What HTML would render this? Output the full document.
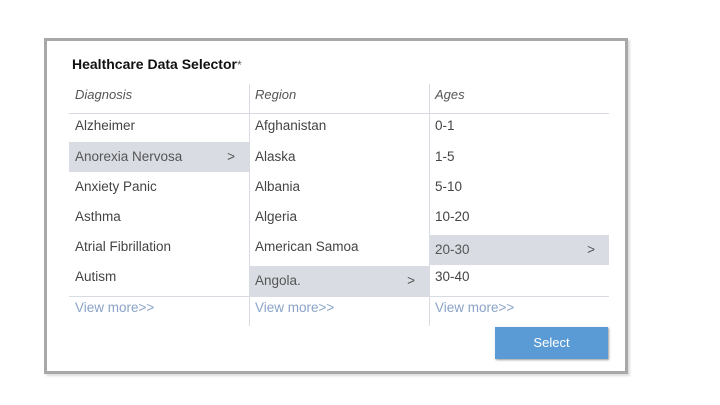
<!DOCTYPE html><html><head><style>
body{margin:0;width:720px;height:405px;background:#fff;font-family:"Liberation Sans",sans-serif;position:relative;overflow:hidden}
.box{position:absolute;left:44px;top:38px;width:578px;height:330px;border:3px solid #a8a8a8;background:#fff;box-shadow:2px 2px 2px #ddd}
.t{position:absolute;left:72px;top:56px;font-size:14px;font-weight:bold;color:#111}
.t span{font-weight:normal;font-size:12px;color:#555}
.col{position:absolute;top:84px;width:180px;height:242px}
.vl{position:absolute;top:84px;width:1px;height:242px;background:#d8dce2}
.h{position:absolute;font-style:italic;font-size:13px;color:#555;top:3px;left:6px}
.hl{position:absolute;left:0;width:180px;height:1px;background:#d8dce2}
.r{position:absolute;left:0;width:168px;height:30px;line-height:30px;padding-left:6px;font-size:13.5px;color:#444;padding-right:6px}
.s{background:#d9dde3;color:#555}
.s b{font-weight:normal;float:right;margin-right:8px}
.vm{position:absolute;left:6px;top:216px;font-size:13.5px;color:#8aa3c8}
.btn{position:absolute;left:495px;top:327px;width:113px;height:32px;background:#5b9bd5;color:#fff;font-size:13px;text-align:center;line-height:32px;box-shadow:1px 1px 2px #999}
</style></head><body>
<div class="box"></div>
<div class="t">Healthcare Data Selector<span>*</span></div>
<div class="col" style="left:69px"><div class="h">Diagnosis</div><div class="hl" style="top:29px"></div>
<div class="r" style="top:27px">Alzheimer</div><div class="r s" style="top:58px">Anorexia Nervosa<b>&gt;</b></div><div class="r" style="top:88px">Anxiety Panic</div><div class="r" style="top:118px">Asthma</div><div class="r" style="top:148px">Atrial Fibrillation</div><div class="r" style="top:178px">Autism</div>
<div class="hl" style="top:212px"></div><div class="vm">View more&gt;&gt;</div></div>
<div class="vl" style="left:249px"></div>
<div class="col" style="left:249px"><div class="h">Region</div><div class="hl" style="top:29px"></div>
<div class="r" style="top:27px">Afghanistan</div><div class="r" style="top:58px">Alaska</div><div class="r" style="top:88px">Albania</div><div class="r" style="top:118px">Algeria</div><div class="r" style="top:148px">American Samoa</div><div class="r s" style="top:182px">Angola.<b>&gt;</b></div>
<div class="hl" style="top:212px"></div><div class="vm">View more&gt;&gt;</div></div>
<div class="vl" style="left:429px"></div>
<div class="col" style="left:429px"><div class="h">Ages</div><div class="hl" style="top:29px"></div>
<div class="r" style="top:27px">0-1</div><div class="r" style="top:58px">1-5</div><div class="r" style="top:88px">5-10</div><div class="r" style="top:118px">10-20</div><div class="r s" style="top:151px">20-30<b>&gt;</b></div><div class="r" style="top:178px">30-40</div>
<div class="hl" style="top:212px"></div><div class="vm">View more&gt;&gt;</div></div>
<div class="btn">Select</div>
</body></html>
